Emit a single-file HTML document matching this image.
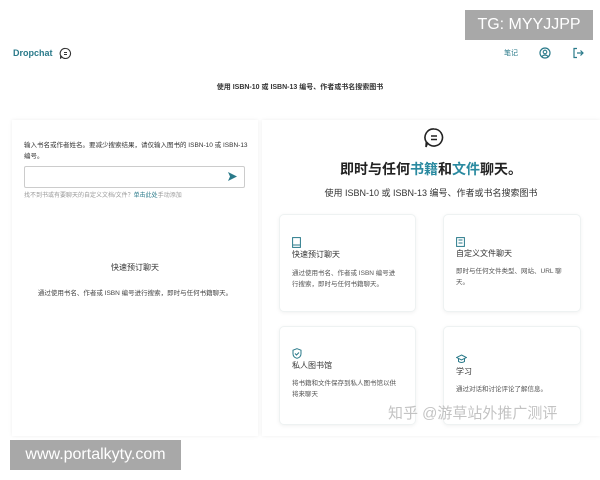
<!DOCTYPE html>
<html><head><meta charset="utf-8"><style>
*{margin:0;padding:0;box-sizing:border-box}
body{width:600px;height:480px;background:#fff;font-family:"Liberation Sans","Noto Sans CJK SC",sans-serif;position:relative;overflow:hidden;color:#222}
.a{position:absolute}
.card{position:absolute;background:#fff;border:1px solid #eef2f2;border-radius:5px;box-shadow:0 1px 4px rgba(0,0,0,.06)}
.card .t{position:absolute;left:12px;font-size:8px;color:#333}
.card .d{position:absolute;left:12px;font-size:6.5px;color:#555;line-height:11px;width:108px}
.card svg{position:absolute;left:12px}
</style></head><body>
<div class="a" style="left:465px;top:10px;width:128px;height:30px;background:#a8a8a8;color:#fff;font-size:16px;line-height:30px;text-align:center">TG: MYYJJPP</div>
<div class="a" style="left:13px;top:48px;font-size:9px;font-weight:bold;color:#2a7a8a">Dropchat</div>
<svg class="a" style="left:59px;top:47px" width="13" height="13" viewBox="0 0 13 13"><path d="M6.5 1.5a5 5 0 1 1-4 8l-1 2.2 .2-3A5 5 0 0 1 6.5 1.5z" fill="none" stroke="#333" stroke-width="1.1"/><path d="M5 5.5h3M5 7.5h3" stroke="#333" stroke-width="1"/></svg>
<div class="a" style="left:504px;top:48px;font-size:7px;color:#2a7a8a">笔记</div>
<svg class="a" style="left:539px;top:47px" width="12" height="12" viewBox="0 0 12 12"><circle cx="6" cy="6" r="5" fill="none" stroke="#2a7a8a" stroke-width="1.2"/><circle cx="6" cy="5" r="1.8" fill="none" stroke="#2a7a8a" stroke-width="1.1"/><path d="M2.8 9.5q3.2-3 6.4 0" fill="none" stroke="#2a7a8a" stroke-width="1.1"/></svg>
<svg class="a" style="left:572px;top:47px" width="12" height="12" viewBox="0 0 12 12"><path d="M5 1.5H2v9h3M5 6h6M8.5 3.5 11 6 8.5 8.5" fill="none" stroke="#2a7a8a" stroke-width="1.2"/></svg>
<div class="a" style="left:0;top:82px;width:600px;text-align:center;font-size:7px;font-weight:bold;color:#333">使用 ISBN-10 或 ISBN-13 编号、作者或书名搜索图书</div>
<div class="a" style="left:12px;top:120px;width:246px;height:316px;background:#fff;box-shadow:0 0 4px rgba(0,0,0,.07)"></div>
<div class="a" style="left:24px;top:140px;width:225px;font-size:6.5px;line-height:11px;color:#333">输入书名或作者姓名。要减少搜索结果，请仅输入图书的 ISBN-10 或 ISBN-13 编号。</div>
<div class="a" style="left:24px;top:166px;width:221px;height:22px;border:1px solid #ccc;border-radius:2px"></div>
<svg class="a" style="left:227px;top:171px" width="11" height="11" viewBox="0 0 11 11"><path d="M1 1l9 4.5L1 10l2-4.5z" fill="#2a7a8a"/></svg>
<div class="a" style="left:24px;top:190px;font-size:6px;color:#999">找不到书或有要聊天的自定义文档/文件？<span style="color:#2a7a8a">单击此处</span>手动添加</div>
<div class="a" style="left:12px;top:262px;width:246px;text-align:center;font-size:8px;color:#333">快速预订聊天</div>
<div class="a" style="left:12px;top:287px;width:246px;text-align:center;font-size:6.5px;color:#444">通过使用书名、作者或 ISBN 编号进行搜索，即时与任何书籍聊天。</div>
<div class="a" style="left:262px;top:120px;width:338px;height:316px;background:#fff;box-shadow:0 0 4px rgba(0,0,0,.07)"></div>
<svg class="a" style="left:423px;top:127px" width="22" height="22" viewBox="0 0 22 22"><path d="M11 2a8.5 8.5 0 1 1-6.5 14l-1.5 4 .3-5A8.5 8.5 0 0 1 11 2z" fill="none" stroke="#222" stroke-width="1.6"/><path d="M8 9h6M8 12.5h6" stroke="#222" stroke-width="1.5"/></svg>
<div class="a" style="left:262px;top:159px;width:338px;text-align:center;font-size:14px;font-weight:bold;color:#222">即时与任何<span style="color:#2a8aa0">书籍</span>和<span style="color:#2a8aa0">文件</span>聊天。</div>
<div class="a" style="left:262px;top:186px;width:338px;text-align:center;font-size:9px;color:#333">使用 ISBN-10 或 ISBN-13 编号、作者或书名搜索图书</div>
<div class="card" style="left:279px;top:214px;width:137px;height:98px">
<svg style="top:22px" width="9" height="11" viewBox="0 0 9 11"><rect x=".6" y=".6" width="7.8" height="9.8" fill="none" stroke="#2a7a8a"/><path d="M.6 8h7.8" stroke="#2a7a8a"/></svg>
<div class="t" style="top:34px">快速预订聊天</div><div class="d" style="top:53px">通过使用书名、作者或 ISBN 编号进行搜索，即时与任何书籍聊天。</div></div>
<div class="card" style="left:443px;top:214px;width:138px;height:98px">
<svg style="top:22px" width="9" height="10" viewBox="0 0 9 10"><rect x=".6" y=".6" width="7.8" height="8.8" fill="none" stroke="#2a7a8a"/><path d="M2.5 3h4M2.5 6h4" stroke="#2a7a8a"/></svg>
<div class="t" style="top:33px">自定义文件聊天</div><div class="d" style="top:51px">即时与任何文件类型、网站、URL 聊天。</div></div>
<div class="card" style="left:279px;top:326px;width:137px;height:99px">
<svg style="top:21px" width="10" height="11" viewBox="0 0 10 11"><path d="M5 .7l4 1.5v3.5c0 2.5-2 4-4 4.6-2-.6-4-2.1-4-4.6V2.2z" fill="none" stroke="#2a7a8a"/><path d="M3 5.5l1.5 1.5L7 4.5" fill="none" stroke="#2a7a8a"/></svg>
<div class="t" style="top:33px">私人图书馆</div><div class="d" style="top:51px">将书籍和文件保存到私人图书馆以供将来聊天</div></div>
<div class="card" style="left:443px;top:326px;width:138px;height:99px">
<svg style="top:27px" width="11" height="10" viewBox="0 0 11 10"><path d="M5.5 1 10.5 3.5 5.5 6 .5 3.5z" fill="none" stroke="#2a7a8a"/><path d="M2.5 4.5v3q3 2 6 0v-3" fill="none" stroke="#2a7a8a"/></svg>
<div class="t" style="top:39px">学习</div><div class="d" style="top:57px">通过对话和讨论评论了解信息。</div></div>
<div class="a" style="left:388px;top:402px;font-size:15px;color:rgba(170,170,170,.7)">知乎 @游草站外推广测评</div>
<div class="a" style="left:10px;top:440px;width:171px;height:30px;background:#a8a8a8;color:#fff;font-size:16px;line-height:30px;text-align:center">www.portalkyty.com</div>
</body></html>
